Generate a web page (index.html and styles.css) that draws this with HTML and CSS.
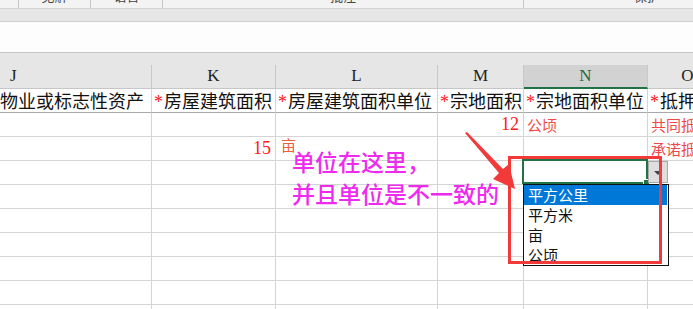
FILE: index.html
```html
<!DOCTYPE html>
<html lang="zh">
<head>
<meta charset="utf-8">
<link rel="stylesheet" href="styles.css">
</head>
<body>
<div class="page">
  <div class="ribbon">
    <div class="grp g0"></div>
    <div class="grp g1"><span>见解</span></div>
    <div class="grp g2"><span>语言</span></div>
    <div class="grp g3"><span>批注</span></div>
    <div class="grp g4"><span>保护</span></div>
  </div>
  <div class="band"></div>
  <div class="formula"></div>
  <div class="topstrip"></div>
  <div class="sheet">
    <div class="ch first">J</div>
    <div class="ch">K</div>
    <div class="ch">L</div>
    <div class="ch">M</div>
    <div class="ch sel">N</div>
    <div class="ch">O</div>

    <div class="c hdr right">物业或标志性资产</div>
    <div class="c hdr"><span class="req">*</span>房屋建筑面积</div>
    <div class="c hdr"><span class="req">*</span>房屋建筑面积单位</div>
    <div class="c hdr"><span class="req">*</span>宗地面积</div>
    <div class="c hdr"><span class="req">*</span>宗地面积单位</div>
    <div class="c hdr"><span class="req">*</span>抵押</div>

    <div class="c"></div>
    <div class="c"></div>
    <div class="c"></div>
    <div class="c num">12</div>
    <div class="c unit">公顷</div>
    <div class="c unit">共同抵</div>

    <div class="c"></div>
    <div class="c num">15</div>
    <div class="c unit mu">亩</div>
    <div class="c"></div>
    <div class="c"></div>
    <div class="c unit">承诺抵</div>

    <div class="c"></div><div class="c"></div><div class="c"></div><div class="c"></div><div class="c"></div><div class="c"></div>
    <div class="c"></div><div class="c"></div><div class="c"></div><div class="c"></div><div class="c"></div><div class="c"></div>
    <div class="c"></div><div class="c"></div><div class="c"></div><div class="c"></div><div class="c"></div><div class="c"></div>
    <div class="c"></div><div class="c"></div><div class="c"></div><div class="c"></div><div class="c"></div><div class="c"></div>
    <div class="c"></div><div class="c"></div><div class="c"></div><div class="c"></div><div class="c"></div><div class="c"></div>
    <div class="c"></div><div class="c"></div><div class="c"></div><div class="c"></div><div class="c"></div><div class="c"></div>
    <div class="c"></div><div class="c"></div><div class="c"></div><div class="c"></div><div class="c"></div><div class="c"></div>
  </div>

  <div class="selcell"><span class="handle"></span></div>
  <div class="ddbtn"><span class="tri"></span></div>
  <div class="ddlist">
    <div class="item active">平方公里</div>
    <div class="item">平方米</div>
    <div class="item">亩</div>
    <div class="item">公顷</div>
  </div>
  <div class="redbox"></div>
  <div class="note">单位在这里，<br>并且单位是不一致的</div>
  <svg class="arrow" width="693" height="309" viewBox="0 0 693 309">
    <polygon points="465,133 467,132 503,169 509,164 515,189 493,179 499,173" fill="#f23a3a"/>
  </svg>
</div>
</body>
</html>
```
FILE: styles.css
```css
html, body {
  margin: 0;
  padding: 0;
  background: #ffffff;
}
.page {
  position: relative;
  width: 693px;
  height: 309px;
  overflow: hidden;
  font-family: "Noto Sans CJK SC", "Noto Sans", sans-serif;
}
.ribbon {
  display: flex;
  height: 8px;
  background: #f3f3f3;
  border-bottom: 1px solid #d4d4d4;
  overflow: hidden;
}
.grp {
  flex: none;
  height: 8px;
  border-right: 1px solid #c6c6c6;
  display: flex;
  justify-content: center;
  box-sizing: border-box;
}
.grp span {
  display: block;
  font-size: 13px;
  line-height: 14px;
  margin-top: -11px;
  color: #444;
}
.g0 { width: 19px; }
.g1 { width: 72px; }
.g2 { width: 72px; }
.g3 { width: 361px; }
.g4 { width: 246px; border-right: none; }
.band {
  height: 12px;
  background: #e6e6e6;
  border-bottom: 1px solid #cfcfcf;
}
.formula {
  height: 30px;
  background: #fdfdfd;
  border-bottom: 1px solid #c6c6c6;
}
.topstrip {
  height: 12px;
  background: #e6e6e6;
}
.sheet {
  display: grid;
  grid-template-columns: 152px 124px 162px 86px 124px 80px;
  grid-auto-rows: 24px;
}
.ch {
  box-sizing: border-box;
  background: #e6e6e6;
  border-right: 1px solid #c8c8c8;
  border-bottom: 1px solid #c6c6c6;
  font-family: "Liberation Serif", serif;
  font-size: 17px;
  line-height: 22px;
  text-align: center;
  color: #222;
}
.ch.first {
  text-align: left;
  padding-left: 10px;
}
.ch.sel {
  background: #d2d2d2;
  border-bottom: 2px solid #217346;
  color: #1e6a3f;
}
.c {
  box-sizing: border-box;
  border-right: 1px solid #d4d4d4;
  border-bottom: 1px solid #d4d4d4;
  font-size: 15px;
  line-height: 23px;
  white-space: nowrap;
  overflow: hidden;
  padding-left: 3px;
}
.c.hdr {
  font-size: 18px;
  color: #111;
  border-bottom-color: #a8a8a8;
  padding-left: 2px;
}
.c.right {
  text-align: right;
  padding-right: 8px;
  padding-left: 0;
}
.req {
  color: #ff1a1a;
  font-family: "Liberation Serif", serif;
  margin-right: 1px;
}
.num {
  color: #ff1a1a;
  text-align: right;
  padding-right: 4px;
  font-family: "Liberation Serif", serif;
  font-size: 18px;
}
.unit {
  color: #f04848;
}
.unit.mu {
  color: #e8603a;
  line-height: 15px;
  padding-left: 5px;
}
.selcell {
  position: absolute;
  left: 522px;
  top: 159px;
  width: 126px;
  height: 25px;
  box-sizing: border-box;
  border: 2px solid #217346;
  background: #fff;
}
.handle {
  position: absolute;
  right: -4px;
  bottom: -4px;
  width: 5px;
  height: 5px;
  background: #217346;
  border: 1px solid #fff;
}
.ddbtn {
  position: absolute;
  left: 648px;
  top: 161px;
  width: 20px;
  height: 22px;
  box-sizing: border-box;
  background: #dedede;
  border: 1px solid #a9a9a9;
}
.tri {
  position: absolute;
  left: 5px;
  top: 9px;
  width: 0;
  height: 0;
  border-left: 4px solid transparent;
  border-right: 4px solid transparent;
  border-top: 4px solid #444;
}
.ddlist {
  position: absolute;
  left: 523px;
  top: 184px;
  width: 146px;
  height: 82px;
  box-sizing: border-box;
  border: 1px solid #111;
  background: #fff;
}
.item {
  height: 20px;
  line-height: 20px;
  font-size: 15px;
  padding-left: 4px;
  color: #111;
}
.item.active {
  background: #0078d7;
  color: #fff;
  margin-right: 1px;
}
.redbox {
  position: absolute;
  left: 508px;
  top: 156px;
  width: 154px;
  height: 108px;
  box-sizing: border-box;
  border: 3px solid #f23a3a;
}
.note {
  position: absolute;
  left: 292px;
  top: 145px;
  font-size: 23px;
  line-height: 32px;
  font-weight: 500;
  color: #ef2aef;
  white-space: nowrap;
}
.arrow {
  position: absolute;
  left: 0;
  top: 0;
}
```
